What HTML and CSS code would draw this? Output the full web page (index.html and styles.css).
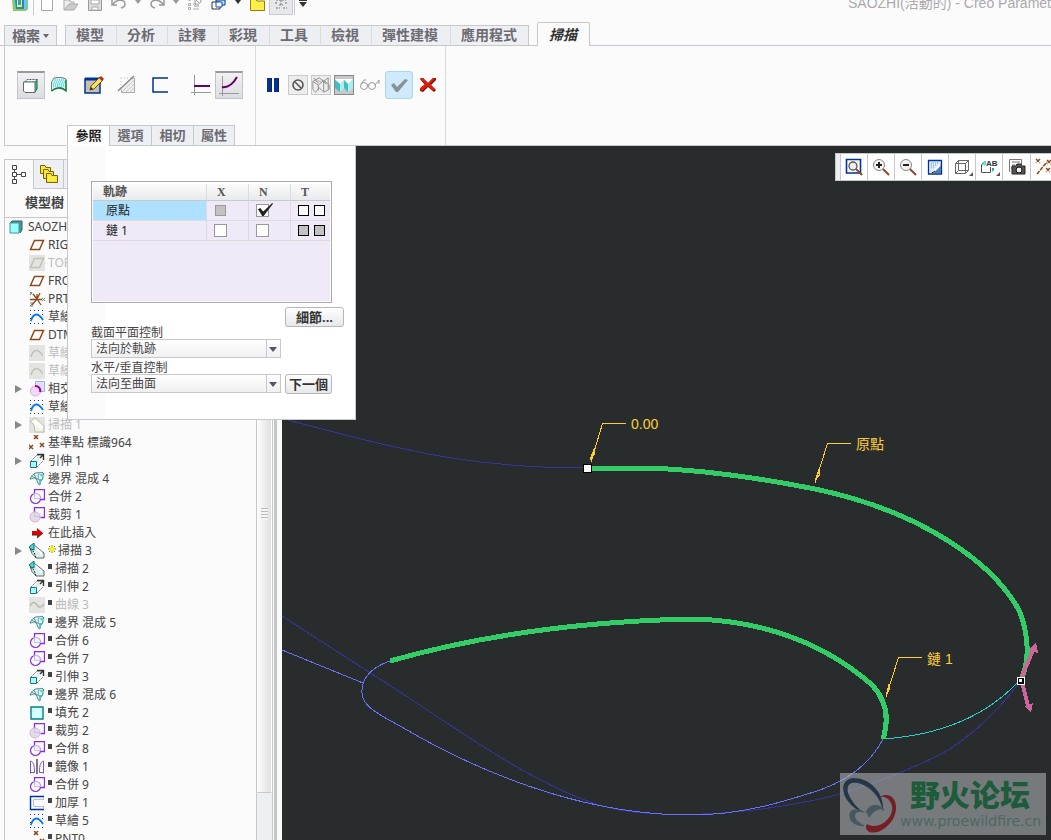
FILE: index.html
```html
<!DOCTYPE html>
<html lang="zh-Hant">
<head>
<meta charset="utf-8">
<title>SAOZHI - Creo Parametric</title>
<link rel="stylesheet" href="styles.css">
</head>
<body>
<svg class="defs" aria-hidden="true">
  <symbol id="plane" viewBox="0 0 16 16"><path d="M5.5 3.5H14.5L10.500 12.500H1.500Z" fill="#fff" stroke="#8b4a1c" stroke-width="1.500"/></symbol>
  <symbol id="plane-off" viewBox="0 0 16 16"><path d="M0 0H16V16H0Z" fill="#e3e3e1"/><path d="M5.500 3.500H14.500L10.500 12.500H1.500Z" fill="none" stroke="#c2c1b2" stroke-width="1.500"/></symbol>
  <symbol id="csys" viewBox="0 0 16 16"><path d="M1 8.500H13M8 8L4 3M8 8L11 2M8 8L12 14M8 8L3 14M8 8V3" fill="none" stroke="#8b4a1c" stroke-width="1.300"/><path d="M1 1L3 3M3 1L1 4M13 7L16 10M16 7L13 10M1 12H4L1 15H4" fill="none" stroke="#777"/></symbol>
  <symbol id="sketch" viewBox="0 0 16 16"><path d="M1 1.500H15M1 14.500H15M1 5.500H4M13 5.500H15M1 9.500H2" stroke="#223a9a" stroke-dasharray="1 3"/><path d="M2 12C3 8 5 5.500 7.500 5.500S12 8 14 11" fill="none" stroke="#0a78e8" stroke-width="1.800"/></symbol>
  <symbol id="sketch-off" viewBox="0 0 16 16"><path d="M0 0H16V16H0Z" fill="#e3e3e1"/><path d="M2 12C3 8 5 5.500 7.500 5.500S12 8 14 11" fill="none" stroke="#c2c1b2" stroke-width="1.300"/></symbol>
  <symbol id="intersect" viewBox="0 0 16 16"><path d="M6.500 .500H15.500V10.500H6.500Z" fill="#e0e0ff" stroke="#a9a9ee"/><circle cx="6.500" cy="10" r="5" fill="#f3d9f3" stroke="#dda5e2"/><path d="M6 5C10 5 12 8 11 11" fill="none" stroke="#a000a0" stroke-width="2"/></symbol>
  <symbol id="sweep-off" viewBox="0 0 16 16"><path d="M0 0H16V16H0Z" fill="#e3e3e1"/><path d="M1 4L6 1L15 9V15H6L5 8Z" fill="#f3f3e8" stroke="#bdbda9"/><path d="M6 2L14 9L12 12L5 7Z" fill="#fff"/></symbol>
  <symbol id="points" viewBox="0 0 16 16"><path d="M5 0L9 4M9 0L5 4M0 10L4 14M4 10L0 14M11 8L15 12M15 8L11 12" stroke="#8b4a1c" stroke-width="1.500"/></symbol>
  <symbol id="extrude" viewBox="0 0 16 16"><path d="M2 8L8 2H13M8 14L14 8" fill="none" stroke="#777" stroke-dasharray="2 1"/><path d="M4 8L9 3L13 4L8 9Z" fill="#d9f3f3"/><path d="M8 1.500H14.500V7M11 5L14 2" fill="none" stroke="#333" stroke-width="1.400"/><path d="M1.500 8.500H7.500V14.500H1.500Z" fill="#9ff" stroke="#2b6f78"/></symbol>
  <symbol id="blend" viewBox="0 0 16 16"><path d="M1 8C3 3 7 1 10 2C12 1 14 1 15 3C13 5 15 6 13 9C11 9 11 12 11 14C8 13 9 10 7 8C5 6 3 8 1 8Z" fill="#d8f8f8" stroke="#387f86"/><path d="M3 5L8 8L13 9M10 3C8 5 10 5 9 8M5 3L7 7" fill="none" stroke="#527b80" stroke-width=".8"/><path d="M10 8H13L10 13ZM11 3H14L12 6Z" fill="#42c9cf"/></symbol>
  <symbol id="merge" viewBox="0 0 16 16"><path d="M5.500 4.500V.500H15.500V10.500H11.500" fill="none" stroke="#8b2be2" stroke-width="1.300"/><circle cx="6.500" cy="9.500" r="5" fill="#fff" stroke="#8b2be2" stroke-width="1.200"/><path d="M5.500 5V9.500H11.500A5 5 0 0 0 5.500 4.500" fill="#f3f0ff" stroke="#c9bdf5"/></symbol>
  <symbol id="trim" viewBox="0 0 16 16"><path d="M5.500 5V.500H15.500V10.500H11.500" fill="none" stroke="#8b2be2" stroke-width="1.300"/><circle cx="6" cy="10" r="5" fill="#dfdfdf" stroke="#e2a8e8"/><path d="M5.500 5V9.500H11" fill="none" stroke="#c7bfff"/></symbol>
  <symbol id="insert" viewBox="0 0 16 16"><path d="M3 6H8V3L14 8L8 13V10H3Z" fill="#e00000"/><path d="M8 13L14 8M3 10H8" stroke="#333"/></symbol>
  <symbol id="sweep" viewBox="0 0 16 16"><path d="M5 2L15 10V15H7Q2 11 1 5" fill="#d9eeee" stroke="#666"/><path d="M0 4L5 0V7L2 6Z" fill="#3edfe1" stroke="#176f75"/><path d="M5 3L13 9V13Z" fill="#fff"/><path d="M1 6L5 9L7 15" fill="none" stroke="#333" stroke-dasharray="2 1"/></symbol>
  <symbol id="curve-off" viewBox="0 0 16 16"><path d="M0 0H16V16H0Z" fill="#e3e3e1"/><path d="M1 9C4 4 6 5 8 8S12 11 15 7" fill="none" stroke="#bdbba9" stroke-width="1.500"/></symbol>
  <symbol id="fill" viewBox="0 0 16 16"><path d="M2 2H14V14H2Z" fill="#c9ffff" stroke="#087f82" stroke-width="1.400"/><path d="M4 12L12 4M4 8L8 4M8 12L12 8" stroke="#fff"/></symbol>
  <symbol id="mirror" viewBox="0 0 16 16"><path d="M8 0V15" stroke="#333" stroke-width="1.300"/><path d="M1.500 14.500V2C4.500 3 5.500 6 5.500 13.500H1.500M14.500 14.500V2C11.500 3 10.500 6 10.500 13.500H14.500" fill="#fff" stroke="#7b4fe0"/></symbol>
  <symbol id="thicken" viewBox="0 0 16 16"><path d="M15 1.500H1.500V14.500H15" fill="none" stroke="#003399" stroke-width="1.400"/><path d="M15 4.500H4.500V11.500H15M14.500 2V5M14.500 11V14" fill="none" stroke="#b3b9ff"/></symbol>
</svg>

<div class="app">
  <header class="titlebar">
    <nav class="quick" aria-label="快速存取">
      <button class="q"><svg width="16" height="12" viewBox="0 0 16 12"><path d="M0 0H16V9L14 11H1Z" fill="#8fc760"/><path d="M2 0H15V9H3Z" fill="#66c8ee"/><path d="M3 0H12V9H4Z" fill="#2a86b5"/><path d="M5 0H10V7H5Z" fill="#e7ef5b"/><path d="M6 0H9V5H6Z" fill="#3a9acb"/></svg></button>
      <i class="q-sep"></i>
      <button class="q"><svg width="14" height="12" viewBox="0 0 14 12"><path d="M1.500 0V10.500H12.500V0" fill="#fff" stroke="#a9a9a9"/></svg></button>
      <button class="q"><svg width="16" height="12" viewBox="0 0 16 12"><path d="M1 10V0H7V2H11V4" fill="#eee" stroke="#aaa"/><path d="M1 10L6 4H15L11 10Z" fill="#ccc" stroke="#aaa"/></svg></button>
      <button class="q"><svg width="16" height="12" viewBox="0 0 16 12"><path d="M1.500 0V10.500H14.500V0" fill="#ddd" stroke="#999"/><path d="M4 0H12V4H4ZM5 7H11V10H5Z" fill="#fff" stroke="#aaa"/></svg></button>
      <button class="q"><svg width="16" height="12" viewBox="0 0 16 12"><path d="M1 0V5H6M2 4C7-2 14 0 14 4Q14 7 10 8" fill="none" stroke="#999" stroke-width="1.500"/></svg></button>
      <button class="q q-caret"><svg width="6" height="4" viewBox="0 0 6 4"><path d="M0 0H6L3 4Z" fill="#999"/></svg></button>
      <button class="q"><svg width="16" height="12" viewBox="0 0 16 12"><path d="M15 0V5H10M14 4C9-2 2 0 2 4Q2 7 6 8" fill="none" stroke="#999" stroke-width="1.500"/></svg></button>
      <button class="q q-caret"><svg width="6" height="4" viewBox="0 0 6 4"><path d="M0 0H6L3 4Z" fill="#999"/></svg></button>
      <button class="q"><svg width="16" height="12" viewBox="0 0 16 12"><path d="M1.500 .500H3.500M1.500 3.500H3.500V5.500H1.500ZM1.500 7.500H3.500V9.500H1.500ZM6 9H12M6 4H9" fill="none" stroke="#aaa"/><path d="M9 0Q14 6 14 0M8 0V4H12M7 6H12" fill="none" stroke="#999"/></svg></button>
      <button class="q"><svg width="16" height="12" viewBox="0 0 16 12"><path d="M5 0H14V5H5Z" fill="#bfe5fa" stroke="#003399"/><path d="M1 2H9V9H1Z" fill="#fff" stroke="#333"/><path d="M5 2H11V7H5Z" fill="#fff" stroke="#0b4fb3"/></svg></button>
      <button class="q q-caret"><svg width="6" height="4" viewBox="0 0 6 4"><path d="M0 0H6L3 4Z" fill="#333"/></svg></button>
      <button class="q"><svg width="16" height="12" viewBox="0 0 16 12"><path d="M1.500 0V10.500H15.500V1H8L7 0" fill="#ffee4a" stroke="#8f7e16"/></svg></button>
      <button class="q q-on"><svg width="16" height="12" viewBox="0 0 16 12"><path d="M3 0H13M3 8H7M10 8H14M8 0V5M6 5H10M2 3H4M12 3H14" fill="none" stroke="#999" stroke-dasharray="2 1" stroke-width="1.500"/></svg></button>
      <i class="q-sep"></i>
      <button class="q q-caret"><svg width="8" height="7" viewBox="0 0 8 7"><path d="M0 0H8V1H0ZM0 2H8L4 7Z" fill="#333"/></svg></button>
    </nav>
    <div class="title">SAOZHI(活動的) - Creo Paramet</div>
  </header>

  <nav class="tabs">
    <button class="file-tab">檔案<svg width="6" height="4" viewBox="0 0 6 4"><path d="M0 0H6L3 4Z" fill="#666"/></svg></button>
    <div class="tab-group">
      <button>模型</button><button>分析</button><button>註釋</button><button>彩現</button><button>工具</button><button>檢視</button><button>彈性建模</button><button>應用程式</button>
    </div>
    <button class="tab-active">掃描</button>
  </nav>

  <section class="ribbon">
    <div class="dash">
      <div class="tools">
        <div class="set">
          <button class="tool pressed" aria-label="實體"><svg width="18" height="18" viewBox="0 0 18 18"><path d="M13 5L15 2.500V12L13 15" fill="#44c5ba" stroke="#176a2a"/><path d="M2.500 5L5 2.500H15L13 5Z" fill="#dff" stroke="#555" stroke-dasharray="2 1"/><path d="M1.500 5H13V15.500H3L1.500 14Z" fill="#fff" stroke="#666"/></svg></button>
          <button class="tool" aria-label="曲面"><svg width="18" height="16" viewBox="0 0 18 16"><path d="M4 1C8 0 12 0 16 2V14C12 9 7 10 1.500 14V5Z" fill="#c6f5f6" stroke="#777"/><path d="M5 3H15M4 5H15M3 7H15M3 9H15" stroke="#36c1ca" stroke-dasharray="1 1"/><path d="M1.500 14C6 10 12 10 16 14V3" fill="none" stroke="#168036" stroke-width="1.300"/></svg></button>
        </div>
        <div class="set spaced">
          <button class="tool" aria-label="草繪"><svg width="22" height="20" viewBox="0 0 22 20"><path d="M2 4H17V18H2Z" fill="#c5c0b1" stroke="#003399" stroke-width="1.500"/><path d="M2 4H16" stroke="#003399" stroke-width="3"/><path d="M7 15L8 11L17 2L20 5L11 14Z" fill="#f5df62" stroke="#6d531b"/><path d="M16 3L18 1L21 4L19 6Z" fill="#b32a21"/><path d="M7 15L8 12L10 14Z" fill="#222"/></svg></button>
          <button class="tool" aria-label="移除材料"><svg width="20" height="20" viewBox="0 0 20 20"><path d="M4 3.500H17.500V17.500H4.500Z" fill="#eee" stroke="#aaa"/><path d="M5 17L17 5M9 17L17 9M13 17L17 13" stroke="#ccc"/><path d="M3 3H16L3 16Z" fill="#fff"/><path d="M4 3H16M4 3V13" stroke="#bbb" stroke-dasharray="1 2"/><path d="M1 16L17 1" stroke="#888" stroke-width="1.500"/></svg></button>
          <button class="tool" aria-label="薄板"><svg width="16" height="16" viewBox="0 0 16 16"><path d="M16 1H1V15H16" fill="none" stroke="#003399" stroke-width="1.500"/></svg></button>
        </div>
        <div class="set">
          <button class="tool" aria-label="恆定截面"><svg width="20" height="20" viewBox="0 0 20 20"><path d="M3.500 0V20M0 17.500H20" stroke="#999"/><path d="M3 11H19" stroke="#660066" stroke-width="2"/></svg></button>
          <button class="tool pressed" aria-label="可變截面"><svg width="20" height="20" viewBox="0 0 20 20"><path d="M3.500 0V20M0 17.500H20" stroke="#999"/><path d="M3 11C9 12 14 8 18 1" fill="none" stroke="#660066" stroke-width="2"/></svg></button>
        </div>
      </div>
      <div class="subtabs">
        <button class="on">參照</button><button>選項</button><button>相切</button><button>屬性</button>
        <form class="panel">
          <div class="track-box">
            <table class="tracks">
              <thead><tr><th class="name">軌跡</th><th>X</th><th>N</th><th>T</th></tr></thead>
              <tbody>
                <tr><td class="name picked">原點</td><td><input type="checkbox" aria-label="原點 X" class="box grey" disabled></td><td><input type="checkbox" aria-label="原點 N" class="box" checked></td><td><input type="checkbox" aria-label="原點 T1" class="box black"><input type="checkbox" aria-label="原點 T2" class="box black"></td></tr>
                <tr><td class="name">鏈 1</td><td><input type="checkbox" aria-label="鏈 1 X" class="box"></td><td><input type="checkbox" aria-label="鏈 1 N" class="box"></td><td><input type="checkbox" aria-label="鏈 1 T1" class="box black filled"><input type="checkbox" aria-label="鏈 1 T2" class="box black filled"></td></tr>
              </tbody>
            </table>
          </div>
          <button type="button" class="push details">細節...</button>
          <label for="plane-ctl">截面平面控制</label>
          <div class="field"><span class="drop"><select id="plane-ctl"><option>法向於軌跡</option></select></span></div>
          <label for="dir-ctl">水平/垂直控制</label>
          <div class="field"><span class="drop"><select id="dir-ctl"><option>法向至曲面</option></select></span><button type="button" class="push">下一個</button></div>
        </form>
      </div>
    </div>
    <div class="control">
      <button class="tool slim" aria-label="暫停"><svg width="12" height="14" viewBox="0 0 12 14"><path d="M0 0H5V14H0ZM7 0H12V14H7Z" fill="#003399"/><path d="M4 0H5V14H4ZM11 0H12V14H11Z" fill="#222"/></svg></button>
      <button class="mini" aria-label="無預覽"><svg width="14" height="14" viewBox="0 0 14 14"><circle cx="7" cy="7" r="5" fill="none" stroke="#555" stroke-width="1.600"/><path d="M4 4L10 10" stroke="#555" stroke-width="1.600"/></svg></button>
      <button class="mini" aria-label="分離預覽"><svg width="18" height="18" viewBox="0 0 20 18"><path d="M1 5L7 9L13 4L19 9V14L13 17L8 12L4 17L1 14ZM7 9V15M13 4V16M1 5L8 1L13 5L18 1V14M2 1L7 7M16 8L13 5" fill="none" stroke="#888"/><path d="M3 4L10 5M12 3L17 7" stroke="#b7a98b"/></svg></button>
      <button class="mini down" aria-label="附加預覽"><svg width="18" height="16" viewBox="0 0 18 16"><path d="M0 2H18L13 7L9 3L5 7Z" fill="#fff"/><path d="M0 3L5 7V15L0 11ZM9 3L13 7V15L9 11Z" fill="#42bdc1"/><path d="M5 7L9 3V11L5 15ZM13 7L18 3V11L13 15Z" fill="#aceff0"/></svg></button>
      <button class="tool glasses" aria-label="驗證"><svg width="22" height="14" viewBox="0 0 22 14"><circle cx="5" cy="8" r="3.500" fill="none" stroke="#999"/><circle cx="13" cy="8" r="3.500" fill="none" stroke="#999"/><path d="M8 7H10M2 6L5 2H7M16 7L20 2V6" fill="none" stroke="#999"/></svg></button>
      <button class="tool accept" aria-label="確定"><svg width="18" height="15" viewBox="0 0 18 15"><path d="M1 7L4 5L7 9L15 1L18 2L8 14H6Z" fill="#87919a"/></svg></button>
      <button class="tool slim" aria-label="取消"><svg width="18" height="16" viewBox="0 0 18 16"><path d="M1 2L4 1L9 6L14 1H17V3L12 8L17 13L15 15L9 10L4 15L1 14V12L6 8Z" fill="#6b1008"/><path d="M1 1H4L9 6L14 1L16 1L16 2L11 7L16 12L14 14L9 9L3 14L1 13V11L6 7Z" fill="#df1e08"/></svg></button>
    </div>
  </section>

  <main class="work">
    <aside class="side">
      <div class="side-tabs">
        <button class="cur" aria-label="模型樹"><svg width="16" height="20" viewBox="0 0 16 20"><path d="M3.500 4V15M5 9.500H10" stroke="#555"/><path d="M1.500 .500H5.500V4.500H1.500ZM1.500 7.500H5.500V11.500H1.500ZM1.500 14.500H5.500V18.500H1.500ZM10.500 7.500H14.500V11.500H10.500Z" fill="#fff" stroke="#444"/></svg></button>
        <button aria-label="資料夾"><svg width="20" height="20" viewBox="0 0 20 20"><g fill="#ffe62e" stroke="#6f6410"><path d="M1.500 1.500H6L7 3.500H11.500V9.500H1.500Z"/><path d="M4.500 5.500H9L10 7.500H14.500V14.500H4.500Z"/><path d="M7.500 9.500H12L13 11.500H18.500V18.500H7.500Z"/></g><path d="M9 14H17M9 16H17" stroke="#fff6a0" stroke-dasharray="1 1"/></svg></button>
        <button aria-label="我的最愛"></button>
      </div>
      <div class="side-body">
        <div class="tree-pane">
          <h2>模型樹</h2>
          <ul class="tree">
            <li class="root"><svg class="cube" width="14" height="14" viewBox="0 0 14 14"><path d="M1 3L3 1H13V10L11 13" fill="#359da5" stroke="#555"/><path d="M1 3H10V13H1Z" fill="#9ff" stroke="#3b9aa0"/></svg>SAOZHI</li>
            <li><i></i><svg><use href="#plane"/></svg>RIGHT</li>
            <li class="off"><i></i><svg><use href="#plane-off"/></svg>TOP</li>
            <li><i></i><svg><use href="#plane"/></svg>FRONT</li>
            <li><i></i><svg><use href="#csys"/></svg>PRT</li>
            <li><i></i><svg><use href="#sketch"/></svg>草繪</li>
            <li><i></i><svg><use href="#plane"/></svg>DTM</li>
            <li class="off"><i></i><svg><use href="#sketch-off"/></svg>草繪</li>
            <li class="off"><i></i><svg><use href="#sketch-off"/></svg>草繪</li>
            <li><i class="more"></i><svg><use href="#intersect"/></svg>相交</li>
            <li><i></i><svg><use href="#sketch"/></svg>草繪</li>
            <li class="off"><i class="more"></i><svg><use href="#sweep-off"/></svg>掃描 1</li>
            <li><i></i><svg><use href="#points"/></svg>基準點 標識964</li>
            <li><i class="more"></i><svg><use href="#extrude"/></svg>引伸 1</li>
            <li><i></i><svg><use href="#blend"/></svg>邊界 混成 4</li>
            <li><i></i><svg><use href="#merge"/></svg>合併 2</li>
            <li><i></i><svg><use href="#trim"/></svg>裁剪 1</li>
            <li><i></i><svg><use href="#insert"/></svg>在此插入</li>
            <li><i class="more"></i><svg><use href="#sweep"/></svg><svg class="star" viewBox="0 0 8 8"><path d="M4 0V8M0 4H8M1 1L7 7M7 1L1 7" stroke="#8d8300"/><path d="M4 1V7M1 4H7M2 2L6 6M6 2L2 6" stroke="#ff0"/></svg>掃描 3</li>
            <li><i></i><svg><use href="#sweep"/></svg><b></b>掃描 2</li>
            <li><i></i><svg><use href="#extrude"/></svg><b></b>引伸 2</li>
            <li class="off"><i></i><svg><use href="#curve-off"/></svg><b></b>曲線 3</li>
            <li><i></i><svg><use href="#blend"/></svg><b></b>邊界 混成 5</li>
            <li><i></i><svg><use href="#merge"/></svg><b></b>合併 6</li>
            <li><i></i><svg><use href="#merge"/></svg><b></b>合併 7</li>
            <li><i></i><svg><use href="#extrude"/></svg><b></b>引伸 3</li>
            <li><i></i><svg><use href="#blend"/></svg><b></b>邊界 混成 6</li>
            <li><i></i><svg><use href="#fill"/></svg><b></b>填充 2</li>
            <li><i></i><svg><use href="#trim"/></svg><b></b>裁剪 2</li>
            <li><i></i><svg><use href="#merge"/></svg><b></b>合併 8</li>
            <li><i></i><svg><use href="#mirror"/></svg><b></b>鏡像 1</li>
            <li><i></i><svg><use href="#merge"/></svg><b></b>合併 9</li>
            <li><i></i><svg><use href="#thicken"/></svg><b></b>加厚 1</li>
            <li><i></i><svg><use href="#sketch"/></svg><b></b>草繪 5</li>
            <li><i></i><svg><use href="#points"/></svg><b></b>PNT0</li>
          </ul>
        </div>
        <div class="scroll"><div class="thumb"><span></span></div></div>
        <div class="splitter"></div>
      </div>
    </aside>

    <section class="view">
      <svg class="scene" viewBox="282 146 769 694" preserveAspectRatio="xMinYMin slice">
        <g fill="none" stroke="#34349c">
          <path d="M284 419C330 431 362 440 400 448C460 462 520 468 587 468"/>
          <path d="M282 616L400 692C450 724 550 798 620 810C680 820 760 812 820 799C860 790 920 766 950 749Q990 722 1018 684"/>
        </g>
        <g fill="none" stroke="#6a70f8">
          <path d="M282 650L363 683"/>
          <path d="M390 661C372 667 361 678 362 693C363 705 372 711 400 726C500 785 600 815 690 815C740 815 780 803 820 790Q865 774 883 739"/>
        </g>
        <path d="M883 739Q970 733 1018 682" fill="none" stroke="#33cccc"/>
        <g fill="none" stroke="#33cc66" stroke-width="5">
          <path d="M590 468H650C700 470 760 478 815 489C925 512 995 565 1020 612C1030 640 1029 662 1021 680"/>
          <path d="M390 661C460 641 560 622 690 619C770 620 830 648 872 685C888 702 889 720 883 739"/>
        </g>
        <g fill="none" stroke="#cc6699" stroke-width="4"><path d="M1021 679L1033 650M1022 682L1028 706"/></g>
        <path d="M1036 642L1038 653L1028 650ZM1031 713L1024 706L1033 703Z" fill="#cc6699"/>
        <path d="M583.500 464.500H591.500V472.500H583.500Z" fill="#fff" stroke="#000"/>
        <path d="M1017 677H1024V684H1017Z" fill="#000" stroke="#fff"/><path d="M1019 679H1022V682H1019Z" fill="#fff"/>
        <g fill="none" stroke="#ffcc33">
          <path d="M626 423.500H602.500L591 462M594 449L590 460M594 449L595 453L591 459"/>
          <path d="M851 443.500H827.500L815 483M819 469L815 481M819 469L820 474L815 481"/>
          <path d="M922 657.500H898.500L886 697M889 684L886 696M889 684L890 688L886 695"/>
        </g>
        <g class="notes">
          <text x="631" y="429">0.00</text><text x="856" y="449">原點</text><text x="927" y="664">鏈 1</text>
        </g>
      </svg>
      <div class="view-tools">
        <button aria-label="重新調整"><svg viewBox="0 0 18 18"><path d="M1.500 1.500H15.500V15H1.500Z" fill="#fff" stroke="#003399" stroke-width="1.600"/><circle cx="8" cy="8" r="4" fill="#eee" stroke="#555" stroke-width="1.300"/><path d="M11 11L17 17" stroke="#8b4a2c" stroke-width="2"/></svg></button>
        <button aria-label="放大"><svg viewBox="0 0 18 18"><circle cx="7" cy="7" r="5.500" fill="#f4f4f4" stroke="#888"/><path d="M4 7H10M7 4V10" stroke="#222" stroke-width="2"/><path d="M11 11L17 17" stroke="#8b4a2c" stroke-width="2"/></svg></button>
        <button aria-label="縮小"><svg viewBox="0 0 18 18"><circle cx="7" cy="7" r="5.500" fill="#f4f4f4" stroke="#888"/><path d="M4 7H10" stroke="#222" stroke-width="2"/><path d="M11 11L17 17" stroke="#8b4a2c" stroke-width="2"/></svg></button>
        <button aria-label="重繪"><svg viewBox="0 0 18 18"><path d="M2.500 2.500H15.500V16H2.500Z" fill="#d6e8f9" stroke="#003399" stroke-width="1.300"/><path d="M5 5H12M5 7H10M5 9H8" stroke="#7ba3cc" stroke-dasharray="1 1"/><path d="M15 6V15H6Z" fill="#4c80b5"/><path d="M7 14L14 7" stroke="#fff" stroke-width="2"/><path d="M6 15L9 13" stroke="#222"/></svg></button>
        <button aria-label="顯示樣式" class="menu"><svg viewBox="0 0 18 18"><path d="M2.500 5.500H12.500V15.500H2.500ZM5.500 2.500H15.500V12.500H5.500ZM2.500 5.500L5.500 2.500M12.500 5.500L15.500 2.500M12.500 15.500L15.500 12.500M2.500 15.500L5.500 12.500" fill="none" stroke="#666"/></svg></button>
        <button aria-label="已儲存方向" class="menu"><svg viewBox="0 0 18 18"><path d="M1 7L4 4H6M1.500 7V14.500H10.500V9" fill="none" stroke="#555"/><path d="M1 7L4 4H6V7Z" fill="#4ed"/><path d="M12 10H14V12L12 14Z" fill="#1aabae"/><text x="6" y="8" class="ab">AB</text></svg></button>
        <button aria-label="檢視管理員" class="wide"><svg viewBox="0 0 18 18"><path d="M1.500 14V1.500H13.500V6M4 4H12M4 7H7M3 10H5" fill="none" stroke="#777"/><path d="M4 8H8L9 6H13L14 8H17V16H4Z" fill="#555" stroke="#222"/><circle cx="11" cy="12" r="3" fill="#eee" stroke="#111"/></svg></button>
        <button aria-label="基準顯示"><svg viewBox="0 0 18 18"><path d="M1 1L5 5M5 1L1 5M12 2L16 6M16 2L12 6M11 10L15 14M15 10L11 14M2 16L12 4" stroke="#8b4a1c" stroke-width="1.500" stroke-dasharray="4 1"/></svg></button>
      </div>
      <div class="mark">
        <svg width="60" height="58" viewBox="0 0 60 58"><path fill-rule="evenodd" d="M43 37C45 18 30 3 13 3C-4 5 2 30 24 38Q12 29 8 18C6 8 12 7 18 8C30 11 41 22 43 37Z" fill="#243647"/><path d="M39 22C58 12 64 42 42 55C31 61 23 55 27 49C40 57 57 40 51 28C48 22 43 21 39 22Z" fill="#741f25"/><path d="M29 39C13 29 6 36 11 46Q16 52 25 51Q12 44 16 38Q21 35 29 39ZM26 36Q34 24 45 35Q36 32 29 43Z" fill="#455860"/></svg>
        <div class="mark-text"><strong>野火论坛</strong><span>www.proewildfire.cn</span></div>
      </div>
    </section>
  </main>
</div>
</body>
</html>
```

FILE: styles.css
```css
* { box-sizing: border-box; }
body { margin: 0; background: #fbfbfb; color: #444; font: 12px/18px "Noto Sans", "Noto Sans CJK TC", sans-serif; }
button, select { font: inherit; color: inherit; margin: 0; padding: 0; border: 0; background: none; border-radius: 0; }
button { display: flex; align-items: center; justify-content: center; white-space: nowrap; }
button svg { flex: none; }
.defs { position: absolute; width: 0; height: 0; }
.app { display: flex; flex-direction: column; height: 100vh; overflow: hidden; }

/* title bar */
.titlebar { display: flex; justify-content: space-between; height: 22px; flex: none; overflow: hidden; }
.quick { display: flex; padding-left: 8px; height: 15px; }
.q { width: 24px; align-items: flex-start; }
.q-caret { width: 14px; }
.q-sep { width: 1px; margin: 0 1px; background: #c8cacf; }
.q-on { background: #e7e8eb; border: 1px solid #c8cacf; border-top: 0; }
.title { color: #aaaaad; font: 14px/16px "Liberation Sans", "Noto Sans CJK TC", sans-serif; margin-top: -5px; white-space: nowrap; }

/* ribbon tabs */
.tabs { display: flex; align-items: flex-end; flex: none; height: 24px; padding-left: 4px; gap: 8px; border-bottom: 1px solid #c5c8cc; font-size: 14px; font-weight: bold; color: #6b6b72; }
.file-tab, .tab-group { height: 20px; border: 1px solid #c5c8cc; border-bottom: 0; background: #eeeff2; }
.file-tab { width: 53px; gap: 3px; }
.tab-group { display: flex; }
.tab-group button { padding: 0 12px 0 10px; border-right: 1px solid #d8dadd; height: 18px; }
.tab-group button:last-child { border-right: 0; padding-right: 11px; }
.tab-active { height: 24px; margin-bottom: -1px; padding: 0 12px 0 11px; border: 1px solid #c5c8cc; border-bottom: 0; border-radius: 2px 2px 0 0; background: #fbfbfb; color: #333; font-style: italic; }

/* ribbon */
.ribbon { display: flex; flex: none; height: 100px; margin-left: 4px; border-left: 1px solid #c5c8cc; border-bottom: 1px solid #c5c8cc; }
.dash, .control { border-right: 1px solid #d8dadd; }
.dash { width: 251px; display: flex; flex-direction: column; justify-content: space-between; padding-left: 12px; }
.tools { display: flex; padding-top: 25px; }
.set { display: flex; margin-right: 7px; }
.spaced { gap: 5px; margin-right: 13px; }
.tool { width: 28px; height: 28px; }
.pressed { background: linear-gradient(#f1f1f3, #dcdde1); border: 1px solid #c4c5ca; border-top: 2px solid #9a9a9e; }
.control { display: flex; align-items: center; gap: 3px; height: 99px; padding: 0 5px 21px; }
.slim { width: 24px; }
.glasses { width: 25px; }
.mini { width: 20px; height: 20px; background: #ededee; border: 1px solid #c9c9cb; }
.down { background: #c8c8ca; border-color: #88898d; }
.accept { background: #cfeafa; border: 1px solid #a9d5ee; border-radius: 3px; }

.subtabs { position: relative; display: flex; align-self: flex-start; margin-left: 50px; margin-bottom: -1px; font-size: 13px; line-height: 16px; font-weight: bold; color: #6b6b72; }
.subtabs > button { width: 42px; height: 21px; padding-bottom: 2px; border: 1px solid #c5c8cc; border-right-width: 0; background: #eeeff2; }
.subtabs > button:nth-child(4) { border-right-width: 1px; }
.subtabs > .on { background: #fff; border-bottom-color: #fff; color: #222; }

/* references panel */
.panel { position: absolute; z-index: 5; top: 100%; left: 0; width: 289px; padding: 35px 11px 25px 23px; border: 1px solid #c5c8cc; border-top: 0; background: linear-gradient(90deg, #fbfbfb 37px, #fff 37px); color: #444; font-size: 12px; font-weight: normal; line-height: 16px; }
.track-box { width: 241px; height: 122px; padding: 2px 1px 1px; border: 1px solid #a9abae; background: linear-gradient(#f0eaf8, #f0eaf8) content-box #fff; }
.tracks { width: 100%; border-collapse: separate; border-spacing: 0; table-layout: fixed; line-height: 15px; }
.tracks th { width: 42px; height: 17px; padding: 0 0 0 10px; border-right: 1px solid #dcdcdc; border-bottom: 1px solid #c5c8cc; background: linear-gradient(#fbfbfb, #e9eaec); font-family: "Liberation Serif", "Noto Sans CJK TC", serif; color: #555; text-align: left; }
.tracks td { height: 20px; padding: 0 0 0 7px; border-right: 1px solid #dcdcdc; border-bottom: 1px solid #dcdcdc; line-height: 0; }
.tracks th:last-child, .tracks td:last-child { width: auto; border-right: 0; }
.tracks .name { width: 114px; }
.tracks td.name { padding-left: 13px; line-height: 16px; color: #222; }
.tracks td.picked { background: #aee1ff; }
.box { position: relative; appearance: none; width: 13px; height: 13px; margin: 0; border: 1px solid #999; background: #fff; vertical-align: middle; }
.box.grey { width: 11px; height: 11px; margin-left: 1px; background: #c2c2c2; }
.box.black { width: 11px; height: 11px; margin-right: 5px; border-color: #000; }
.box.black:last-child { margin-right: 0; }
.box.filled { background: #c2c2c2; }
.box:checked::after { content: ""; position: absolute; left: 1px; top: -2px; width: 15px; height: 13px; background: #222; clip-path: polygon(0 48%, 15% 38%, 35% 65%, 95% 0, 100% 5%, 38% 100%, 28% 100%); }
.push { height: 20px; padding: 0 3px; border: 1px solid #b5b7ba; border-radius: 3px; background: linear-gradient(#fff, #e7e8ea); font-weight: bold; font-size: 13px; color: #333; }
.details { width: 59px; margin: 4px 0 0 194px; }
.panel label { display: block; height: 12px; line-height: 12px; }
.field { display: flex; gap: 4px; height: 20px; margin-bottom: 3px; }
.field:last-child { margin-bottom: 0; }
.drop { position: relative; width: 190px; height: 19px; }
.drop select { appearance: none; width: 100%; height: 100%; padding: 0 4px; border: 1px solid #c5c8cc; background: linear-gradient(#fff, #f0f0f1); line-height: 16px; color: #444; }
.drop::before { content: ""; position: absolute; right: 14px; top: 1px; bottom: 1px; border-left: 1px solid #c5c8cc; pointer-events: none; }
.drop::after { content: ""; position: absolute; right: 4px; top: 8px; border: 4px solid transparent; border-top: 5px solid #556; border-bottom: 0; pointer-events: none; }

/* work area */
.work { display: flex; flex: 1; min-height: 0; }
.side { display: flex; flex-direction: column; width: 282px; flex: none; padding: 13px 0 0 4px; }
.side-tabs { display: flex; flex: none; height: 30px; }
.side-tabs button { width: 30px; border: 1px solid #c5c8cc; border-right: 0; background: #eeeff2; }
.side-tabs .cur { width: 29px; background: #fbfbfb; border-bottom: 0; }
.side-tabs button:last-child { flex: 1; }
.side-body { display: flex; flex: 1; min-height: 0; }
.tree-pane { flex: 1; overflow: hidden; border-left: 1px solid #c5c8cc; }
.tree-pane h2 { margin: 0; height: 29px; padding-left: 20px; border-bottom: 1px solid #c5c8cc; font-size: 13px; line-height: 27px; color: #444; }
.tree { margin: 0; padding: 0; list-style: none; line-height: 18px; }
.tree li { display: flex; align-items: center; height: 18px; white-space: nowrap; }
.tree .off { color: #bbb; }
.tree .root { padding-left: 4px; }
.tree .cube { width: 14px; margin-right: 5px; }
.tree i { width: 24px; flex: none; }
.tree .more { width: 8px; margin: 0 6px 0 10px; border: 4px solid transparent; border-left: 7px solid #888; border-right: 0; }
.tree svg { width: 16px; height: 16px; flex: none; margin-right: 3px; }
.tree .star { width: 8px; height: 8px; margin: 0 2px 4px 0; }
.tree b { width: 4px; height: 5px; margin: 0 3px 6px 0; background: #444; }
.scroll { width: 17px; border: 1px solid #c5c8cc; border-width: 0 1px; background: #eeeff2; }
.thumb { display: flex; align-items: center; justify-content: center; height: 604px; border: 1px solid #fff; border-bottom-color: #c5c8cc; background: linear-gradient(90deg, #fbfbfb, #dfdfe1); }
.thumb span { width: 7px; height: 12px; margin-top: 46px; background: repeating-linear-gradient(#bbb 0 1px, #f4f4f4 1px 3px); }
.splitter { width: 8px; border-left: 3px solid #c5c6ca; margin-left: 1px; }

/* graphics view */
.view { position: relative; flex: 1; min-width: 0; overflow: hidden; background: #282c2d; }
.scene { display: block; width: 100%; height: 100%; shape-rendering: crispEdges; }
.notes { fill: #ffcc33; font: 14px "Liberation Sans", "Noto Sans CJK TC", sans-serif; }
.view-tools { position: absolute; top: 7px; right: 0; width: 216px; height: 28px; display: flex; overflow: hidden; padding-left: 4px; border: 1px solid #c5c8cc; border-right: 0; background: #eeeff2; }
.view-tools button { position: relative; flex: none; width: 27px; border-left: 1px solid #c5c8cc; background: #fff; }
.view-tools .wide { width: 28px; }
.view-tools svg { width: 18px; height: 18px; }
.view-tools .menu::after { content: ""; position: absolute; right: 2px; bottom: 4px; border: 2px solid #555; border-top-color: transparent; border-left-color: transparent; }
.ab { font: bold 8px "Liberation Sans", sans-serif; fill: #333; }
.mark { position: absolute; right: 5px; bottom: 5px; display: flex; width: 206px; height: 62px; padding-top: 2px; background: rgba(190, 192, 194, .53); }
.mark-text { display: flex; flex-direction: column; }
.mark-text strong { margin-left: 10px; color: #1d5b3b; font: 900 30px/36px "Noto Sans CJK SC", sans-serif; }
.mark-text span { color: #4b6866; font: 14px/20px "DejaVu Sans", sans-serif; }
```
